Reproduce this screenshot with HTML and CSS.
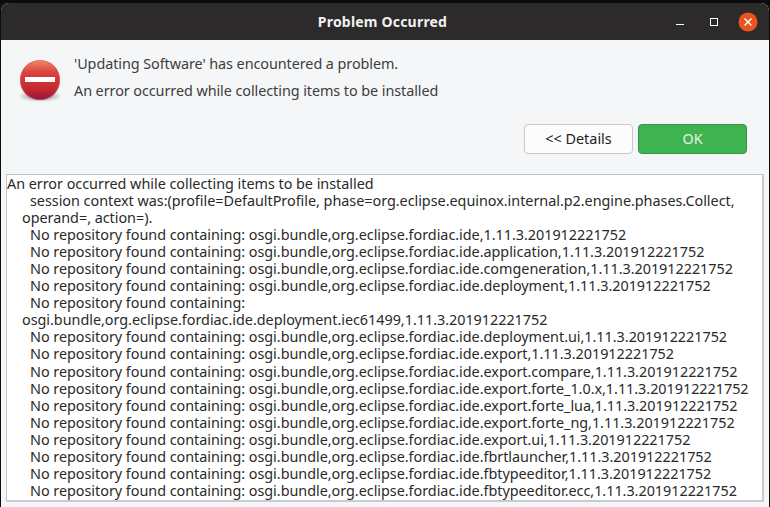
FILE: index.html
```html
<!DOCTYPE html>
<html lang="en">
<head>
<meta charset="utf-8">
<title>Problem Occurred</title>
<link rel="stylesheet" href="styles.css">
</head>
<body>
<div class="window">
  <header class="titlebar">
    <span class="title">Problem Occurred</span>
    <div class="controls">
      <svg class="ctl" width="24" height="24" viewBox="0 0 24 24"><rect x="8" y="14" width="8" height="1" fill="#fff"/></svg>
      <svg class="ctl" width="24" height="24" viewBox="0 0 24 24"><rect x="8.5" y="8.5" width="7" height="7" fill="none" stroke="#fff" stroke-width="1"/></svg>
      <svg class="ctl" width="24" height="24" viewBox="0 0 24 24"><circle cx="12" cy="12" r="9.5" fill="#e95420"/><path d="M8.5 8.5l7 7M15.5 8.5l-7 7" stroke="#fff" stroke-width="1.4"/></svg>
    </div>
  </header>
  <section class="summary">
    <svg class="erricon" width="44" height="46" viewBox="0 0 44 46">
      <defs>
        <linearGradient id="red" x1="0" y1="0" x2="0" y2="1">
          <stop offset="0" stop-color="#ee8a68"/>
          <stop offset="0.3" stop-color="#d9443c"/>
          <stop offset="0.75" stop-color="#c4262e"/>
          <stop offset="1" stop-color="#8c1444"/>
        </linearGradient>
        <radialGradient id="shade"><stop offset="0.6" stop-color="#000" stop-opacity="0.22"/><stop offset="1" stop-color="#000" stop-opacity="0"/></radialGradient>
      </defs>
      <ellipse cx="22" cy="38" rx="22" ry="6" fill="url(#shade)"/>
      <circle cx="22" cy="22" r="20" fill="url(#red)"/>
      <circle cx="22" cy="22" r="19.5" fill="none" stroke="#e0604c" stroke-opacity="0.5"/>
      <rect x="7" y="19" width="30" height="5" fill="#fff"/>
    </svg>
    <div class="messages">
      <p class="msg">'Updating Software' has encountered a problem.</p>
      <p class="msg">An error occurred while collecting items to be installed</p>
    </div>
  </section>
  <div class="buttons">
    <button class="btn details">&lt;&lt; Details</button>
    <button class="btn ok">OK</button>
  </div>
  <div class="log">
    <div class="line">An error occurred while collecting items to be installed</div>
    <div class="line cont">session context was:(profile=DefaultProfile, phase=org.eclipse.equinox.internal.p2.engine.phases.Collect,</div>
    <div class="line wrap">operand=, action=).</div>
    <div class="line cont">No repository found containing: osgi.bundle,org.eclipse.fordiac.ide,1.11.3.201912221752</div>
    <div class="line cont">No repository found containing: osgi.bundle,org.eclipse.fordiac.ide.application,1.11.3.201912221752</div>
    <div class="line cont">No repository found containing: osgi.bundle,org.eclipse.fordiac.ide.comgeneration,1.11.3.201912221752</div>
    <div class="line cont">No repository found containing: osgi.bundle,org.eclipse.fordiac.ide.deployment,1.11.3.201912221752</div>
    <div class="line cont">No repository found containing:</div>
    <div class="line wrap">osgi.bundle,org.eclipse.fordiac.ide.deployment.iec61499,1.11.3.201912221752</div>
    <div class="line cont">No repository found containing: osgi.bundle,org.eclipse.fordiac.ide.deployment.ui,1.11.3.201912221752</div>
    <div class="line cont">No repository found containing: osgi.bundle,org.eclipse.fordiac.ide.export,1.11.3.201912221752</div>
    <div class="line cont">No repository found containing: osgi.bundle,org.eclipse.fordiac.ide.export.compare,1.11.3.201912221752</div>
    <div class="line cont">No repository found containing: osgi.bundle,org.eclipse.fordiac.ide.export.forte_1.0.x,1.11.3.201912221752</div>
    <div class="line cont">No repository found containing: osgi.bundle,org.eclipse.fordiac.ide.export.forte_lua,1.11.3.201912221752</div>
    <div class="line cont">No repository found containing: osgi.bundle,org.eclipse.fordiac.ide.export.forte_ng,1.11.3.201912221752</div>
    <div class="line cont">No repository found containing: osgi.bundle,org.eclipse.fordiac.ide.export.ui,1.11.3.201912221752</div>
    <div class="line cont">No repository found containing: osgi.bundle,org.eclipse.fordiac.ide.fbrtlauncher,1.11.3.201912221752</div>
    <div class="line cont">No repository found containing: osgi.bundle,org.eclipse.fordiac.ide.fbtypeeditor,1.11.3.201912221752</div>
    <div class="line cont">No repository found containing: osgi.bundle,org.eclipse.fordiac.ide.fbtypeeditor.ecc,1.11.3.201912221752</div>
  </div>
</div>
</body>
</html>
```
FILE: styles.css
```css
* { box-sizing: border-box; }
html, body { margin: 0; height: 100%; overflow: hidden; background: #0c0c0c; }
body { padding: 3px 1px 0; font-family: "Noto Sans", sans-serif; }
.window {
  height: 504px;
  display: flex;
  flex-direction: column;
  background: #f5f6f7;
  border-radius: 8px 8px 0 0;
  overflow: hidden;
}
.titlebar {
  height: 37px;
  flex: none;
  background: #2c2a2a;
  display: flex;
  align-items: center;
  justify-content: center;
  padding-right: 5px;
  position: relative;
}
.title { color: #f2f2f2; font-size: 14px; font-weight: 700; letter-spacing: 0.2px; }
.controls {
  position: absolute;
  right: 9px;
  top: 7px;
  display: flex;
  gap: 10px;
}
.ctl { display: block; }
.summary {
  display: flex;
  height: 84px;
  flex: none;
  padding-left: 17px;
}
.erricon { flex: none; margin: 18px 12px 0 0; }
.messages { display: flex; flex-direction: column; gap: 10px; padding-top: 15px; }
.msg { margin: 0; color: #3d3d3d; font-size: 14.4px; line-height: 17px; letter-spacing: -0.07px; }
.buttons {
  flex: none;
  display: flex;
  justify-content: flex-end;
  gap: 5px;
  padding: 0 22px 0 0;
  height: 50px;
}
.btn {
  height: 30px;
  width: 109px;
  font-family: inherit;
  font-size: 14.4px;
  border-radius: 4px;
  padding: 0 0 2px;
}
.details { background: #fcfcfc; border: 1px solid #c6c8ca; color: #222; }
.ok { background: #3eb34f; border: 1px solid #34964a; color: #e4f5e6; }
.log {
  flex: 1;
  margin: 0 5px 5px 5px;
  background: #fff;
  border: 1px solid #bfc4ca;
  border-right: 2px solid #c8ccd0;
  border-bottom: 2px solid #c8ccd0;
  padding: 0;
  overflow: hidden;
  color: #2a2a2a;
  font-size: 14.4px;
  line-height: 17.05px;
  letter-spacing: -0.03px;
}
.line { white-space: nowrap; }
.cont { padding-left: 23px; }
.wrap { padding-left: 15px; }
```
